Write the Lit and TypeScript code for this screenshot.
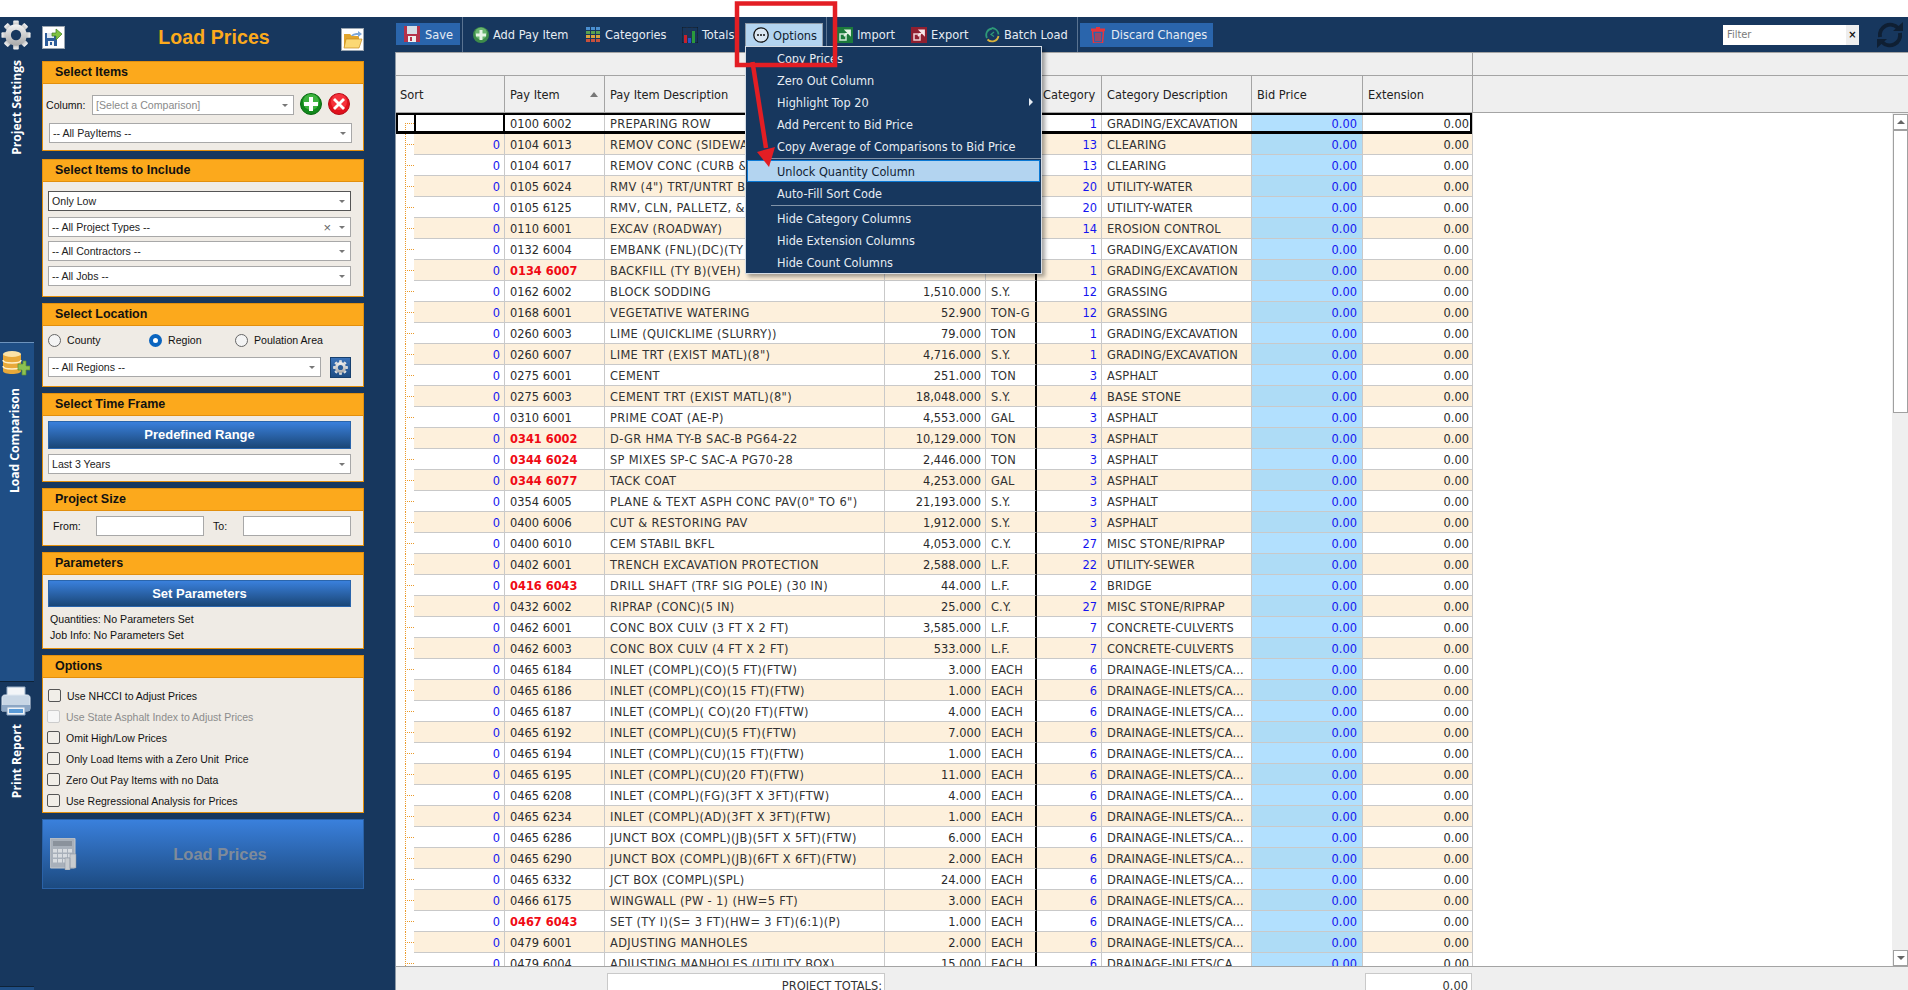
import { LitElement, html, css, svg } from "lit";
import { customElement } from "lit/decorators.js";

type R = [string, string, string, string, number, string, boolean?];
const G = "GRADING/EXCAVATION", A = "ASPHALT", D = "DRAINAGE-INLETS/CA...", M = "MISC STONE/RIPRAP", C = "CONCRETE-CULVERTS";
const rows: R[] = [
  ["0100 6002", "PREPARING ROW", "", "", 1, G],
  ["0104 6013", "REMOV CONC (SIDEWALKS)", "", "", 13, "CLEARING"],
  ["0104 6017", "REMOV CONC (CURB & GUTTER)", "", "", 13, "CLEARING"],
  ["0105 6024", "RMV (4\") TRT/UNTRT BASE", "", "", 20, "UTILITY-WATER"],
  ["0105 6125", "RMV, CLN, PALLETZ, & STACK", "", "", 20, "UTILITY-WATER"],
  ["0110 6001", "EXCAV (ROADWAY)", "", "", 14, "EROSION CONTROL"],
  ["0132 6004", "EMBANK (FNL)(DC)(TY B)", "", "", 1, G],
  ["0134 6007", "BACKFILL (TY B)(VEH)", "", "", 1, G, true],
  ["0162 6002", "BLOCK SODDING", "1,510.000", "S.Y.", 12, "GRASSING"],
  ["0168 6001", "VEGETATIVE WATERING", "52.900", "TON-G", 12, "GRASSING"],
  ["0260 6003", "LIME (QUICKLIME (SLURRY))", "79.000", "TON", 1, G],
  ["0260 6007", "LIME TRT (EXIST MATL)(8\")", "4,716.000", "S.Y.", 1, G],
  ["0275 6001", "CEMENT", "251.000", "TON", 3, A],
  ["0275 6003", "CEMENT TRT (EXIST MATL)(8\")", "18,048.000", "S.Y.", 4, "BASE STONE"],
  ["0310 6001", "PRIME COAT (AE-P)", "4,553.000", "GAL", 3, A],
  ["0341 6002", "D-GR HMA TY-B SAC-B PG64-22", "10,129.000", "TON", 3, A, true],
  ["0344 6024", "SP MIXES SP-C SAC-A PG70-28", "2,446.000", "TON", 3, A, true],
  ["0344 6077", "TACK COAT", "4,253.000", "GAL", 3, A, true],
  ["0354 6005", "PLANE & TEXT ASPH CONC PAV(0\" TO 6\")", "21,193.000", "S.Y.", 3, A],
  ["0400 6006", "CUT & RESTORING PAV", "1,912.000", "S.Y.", 3, A],
  ["0400 6010", "CEM STABIL BKFL", "4,053.000", "C.Y.", 27, M],
  ["0402 6001", "TRENCH EXCAVATION PROTECTION", "2,588.000", "L.F.", 22, "UTILITY-SEWER"],
  ["0416 6043", "DRILL SHAFT (TRF SIG POLE) (30 IN)", "44.000", "L.F.", 2, "BRIDGE", true],
  ["0432 6002", "RIPRAP (CONC)(5 IN)", "25.000", "C.Y.", 27, M],
  ["0462 6001", "CONC BOX CULV (3 FT X 2 FT)", "3,585.000", "L.F.", 7, C],
  ["0462 6003", "CONC BOX CULV (4 FT X 2 FT)", "533.000", "L.F.", 7, C],
  ["0465 6184", "INLET (COMPL)(CO)(5 FT)(FTW)", "3.000", "EACH", 6, D],
  ["0465 6186", "INLET (COMPL)(CO)(15 FT)(FTW)", "1.000", "EACH", 6, D],
  ["0465 6187", "INLET (COMPL)( CO)(20 FT)(FTW)", "4.000", "EACH", 6, D],
  ["0465 6192", "INLET (COMPL)(CU)(5 FT)(FTW)", "7.000", "EACH", 6, D],
  ["0465 6194", "INLET (COMPL)(CU)(15 FT)(FTW)", "1.000", "EACH", 6, D],
  ["0465 6195", "INLET (COMPL)(CU)(20 FT)(FTW)", "11.000", "EACH", 6, D],
  ["0465 6208", "INLET (COMPL)(FG)(3FT X 3FT)(FTW)", "4.000", "EACH", 6, D],
  ["0465 6234", "INLET (COMPL)(AD)(3FT X 3FT)(FTW)", "1.000", "EACH", 6, D],
  ["0465 6286", "JUNCT BOX (COMPL)(JB)(5FT X 5FT)(FTW)", "6.000", "EACH", 6, D],
  ["0465 6290", "JUNCT BOX (COMPL)(JB)(6FT X 6FT)(FTW)", "2.000", "EACH", 6, D],
  ["0465 6332", "JCT BOX (COMPL)(SPL)", "24.000", "EACH", 6, D],
  ["0466 6175", "WINGWALL (PW - 1) (HW=5 FT)", "3.000", "EACH", 6, D],
  ["0467 6043", "SET (TY I)(S= 3 FT)(HW= 3 FT)(6:1)(P)", "1.000", "EACH", 6, D, true],
  ["0479 6001", "ADJUSTING MANHOLES", "2.000", "EACH", 6, D],
  ["0479 6004", "ADJUSTING MANHOLES (UTILITY BOX)", "15.000", "EACH", 6, D],
];

const gear = (size: number, fill: string, hole: string) => html`<svg width=${size} height=${size} viewBox="0 0 32 32">
  <defs><linearGradient id="gg" x1="0" y1="0" x2="0" y2="1"><stop offset="0" stop-color="#f4f4f4"/><stop offset="1" stop-color=${fill}/></linearGradient></defs>
  ${[0, 45, 90, 135, 180, 225, 270, 315].map(a => svg`<rect x="13" y="0.5" width="6" height="7" rx="1" fill="url(#gg)" transform="rotate(${a} 16 16)"/>`)}
  <circle cx="16" cy="16" r="11.5" fill="url(#gg)"/><circle cx="16" cy="16" r="5.5" fill=${hole}/></svg>`;

const floppyArrow = html`<svg width="19" height="19" viewBox="0 0 19 19"><path d="M1 5h12v13H1z" fill="#2d5d9a"/><path d="M3 5h7v5H3z" fill="#dfe8f2"/><path d="M4 13h6v5H4z" fill="#f2f2f2"/><path d="M6 14h2v3H6z" fill="#2d5d9a"/><path d="M8 5h4V1l6 5-6 6V8H8z" fill="#7fc241" stroke="#3c7d1e" stroke-width=".7"/></svg>`;
const folder = html`<svg width="20" height="18" viewBox="0 0 20 18"><path d="M1 3h6l2 2h7v11H1z" fill="#e2a52c"/><path d="M3 8h16l-3 9H1z" fill="#fbd874" stroke="#c58b1c" stroke-width=".7"/><path d="M8 5c2-3 5-3 7-3V0l4 3-4 3V4c-2 0-4 0-5 1z" fill="#7da7d9"/></svg>`;
const plusBtn = html`<svg width="22" height="22" viewBox="0 0 22 22"><circle cx="11" cy="11" r="10.5" fill="#12881c" stroke="#0a6a12"/><circle cx="11" cy="9" r="8" fill="#3eb33f"/><path d="M9 4h4v5h5v4h-5v5H9v-5H4V9h5z" fill="#fff"/></svg>`;
const xBtn = html`<svg width="22" height="22" viewBox="0 0 22 22"><circle cx="11" cy="11" r="10.5" fill="#e0101c" stroke="#b50d18"/><circle cx="11" cy="9" r="8" fill="#f5323c"/><path d="M7 5l4 4 4-4 2 2-4 4 4 4-2 2-4-4-4 4-2-2 4-4-4-4z" fill="#fff"/></svg>`;
const db = html`<svg width="28" height="28" viewBox="0 0 28 28"><path d="M1 4v17c0 2 4 3 9 3s9-1 9-3V4z" fill="#e8a93a"/><ellipse cx="10" cy="4" rx="9" ry="3" fill="#fbe3a8"/><path d="M1 10c0 2 4 3 9 3s9-1 9-3M1 16c0 2 4 3 9 3s9-1 9-3" fill="none" stroke="#fff0c8" stroke-width="1.5"/><path d="M16 14h5v-3h3v5h4v4h-4v5h-4v-5h-4v-4z" fill="#8cc152" stroke="#5f8f2f" stroke-width=".7"/></svg>`;
const printer = html`<svg width="32" height="32" viewBox="0 0 32 32"><path d="M7 2h18v10H7z" fill="#f3f5f8" stroke="#9db2c9"/><path d="M2 13c0-2 1-3 3-3h22c2 0 3 1 3 3v10c0 2-1 3-3 3H2z" fill="#c8d6e5" stroke="#dfe8f2"/><path d="M2 20h28v6H2z" fill="#8ca6c4"/><path d="M7 22h18v8H7z" fill="#eef2f7" stroke="#8ca6c4"/><path d="M9 24h14v4H9z" fill="#5a9bd8"/></svg>`;
const calc = html`<svg width="27" height="32" viewBox="0 0 27 32"><rect x="0" y="0" width="25" height="30" rx="1" fill="#a8b0ba" stroke="#c4c8cc"/><rect x="3" y="3" width="19" height="5" fill="#8a929c"/>${[11, 16, 21].map(y => [3, 8, 13, 18].map(x => svg`<rect x=${x} y=${y} width="4" height="3.5" fill="#d8dce0"/>`))}<path d="M15 20h5v12h-5zM20 16h6v14h-6z" fill="#c8ccd0" stroke="#8a929c" stroke-width=".5"/></svg>`;
const IC: Record<string, any> = {
  save: html`<svg width="16" height="16" viewBox="0 0 16 16"><path d="M0 0h16v16H0z" fill="#b5324a"/><path d="M3 0h10v8H3z" fill="#d5dde6"/><path d="M4 10h8v6H4z" fill="#eee"/><path d="M6 11h2v4H6z" fill="#b5324a"/></svg>`,
  add: html`<svg width="16" height="16" viewBox="0 0 16 16"><circle cx="8" cy="8" r="8" fill="#3d8b4a"/><circle cx="8" cy="6.5" r="6" fill="#69b56f"/><path d="M6.5 3h3v3.5H13v3H9.500V13h-3V9.500H3v-3h3.500z" fill="#e6f3e6"/></svg>`,
  cats: html`<svg width="15" height="15" viewBox="0 0 15 15">${[["#4a8fd0", "#4a8fd0", "#4a8fd0"], ["#59a14f", "#59a14f", "#59a14f"], ["#d9a53c", "#d9a53c", "#d9a53c"], ["#c8503c", "#c8503c", "#c8503c"]].map((r, y) => r.map((c, x) => svg`<rect x=${x * 5} y=${y * 4} width="4" height="3" fill=${c}/>`))}</svg>`,
  totals: html`<svg width="16" height="16" viewBox="0 0 16 16"><path d="M0 0h16v16H0z" fill="none" stroke="#111" stroke-width=".8"/><path d="M0 5h16M0 10h16M5 0v16M10 0v16" stroke="#334" stroke-width=".5"/><path d="M2 8h3v8H2z" fill="#c8202c"/><path d="M6 11h3v5H6z" fill="#2850c8"/><path d="M10 4h3v12h-3z" fill="#2a9a3c"/></svg>`,
  options: html`<svg width="16" height="16" viewBox="0 0 16 16"><circle cx="8" cy="8" r="7.200" fill="#dbe7f2" stroke="#111" stroke-width="1.300"/><circle cx="5" cy="8" r="1" fill="#111"/><circle cx="8" cy="8" r="1" fill="#111"/><circle cx="11" cy="8" r="1" fill="#111"/></svg>`,
  import: html`<svg width="16" height="16" viewBox="0 0 16 16"><path d="M0 0h16v16H0z" fill="#1c7a3c"/><path d="M3 7h6v6H3z" fill="none" stroke="#cfe8d6" stroke-width="1.500"/><path d="M7 9l5-5M9 3.500h4v4z" stroke="#e6f3e6" stroke-width="1.800" fill="#e6f3e6"/></svg>`,
  export: html`<svg width="16" height="16" viewBox="0 0 16 16"><path d="M0 0h16v16H0z" fill="#8f1f30"/><path d="M3 7h6v6H3z" fill="none" stroke="#f0d0d4" stroke-width="1.500"/><path d="M7 9l5-5M9 3.500h4v4z" stroke="#f6e6e8" stroke-width="1.800" fill="#f6e6e8"/></svg>`,
  batch: html`<svg width="15" height="16" viewBox="0 0 15 16"><path d="M2 11a6.500 6.500 0 0 1 5-9.500" fill="none" stroke="#2e9a78" stroke-width="1.800"/><path d="M7 1a7 7 0 0 1 6.500 6.500" fill="none" stroke="#2e9a78" stroke-width="1.800"/><path d="M13.500 9a6.500 6.500 0 0 1-11 3.500" fill="none" stroke="#d8b23c" stroke-width="1.800"/><path d="M9 5L6 7.500l3 2" fill="none" stroke="#2e9a78" stroke-width="1.200"/></svg>`,
  trash: html`<svg width="16" height="17" viewBox="0 0 16 17"><path d="M6 1h4v1.500H6zM1 2.500h14V5H1z" fill="#e8353c"/><path d="M2.500 5h11l-1 12h-9z" fill="none" stroke="#e8353c" stroke-width="1.500"/><path d="M6 7v8M8 7v8M10 7v8" stroke="#e8353c" stroke-width="1.200"/></svg>`,
};

const tools: [string, string, number][] = [
  ["add", "Add Pay Item", 113], ["cats", "Categories", 96], ["totals", "Totals", 63],
];
const tools2: [string, string, number][] = [
  ["import", "Import", 74], ["export", "Export", 74], ["batch", "Batch Load", 92],
];
const opts: [string, boolean][] = [
  ["Use NHCCI to Adjust Prices", false], ["Use State Asphalt Index to Adjust Prices", true], ["Omit High/Low Prices", false],
  ["Only Load Items with a Zero Unit  Price", false], ["Zero Out Pay Items with no Data", false], ["Use Regressional Analysis for Prices", false],
];

@customElement("app-root")
export class AppRoot extends LitElement {
  static styles = css`
    :host { display: block; position: relative; width: 1908px; height: 990px; overflow: hidden; background: #fff; font-family: "Liberation Sans", Arial, sans-serif; font-size: 11px; color: #111; }
    .app { display: flex; height: 973px; margin-top: 17px; position: absolute; top: 0; left: 0; right: 0; background: #17375e; }
    .rail { width: 34px; flex: none; display: flex; flex-direction: column; color: #fff; }
    .tab { display: flex; flex-direction: column; align-items: center; }
    .tab1 { height: 325px; padding-top: 3px; box-sizing: border-box; }
    .tab1 > svg { margin-left: -2px; }
    .tab2 { height: 339px; background: #1f4e85; border-top: 1px solid #6d93bd; box-sizing: border-box; padding-top: 7px; }
    .tab3 { height: 305px; border-top: 1px solid #0f2338; box-sizing: border-box; padding-top: 3px; }
    .tab3 > svg { margin-left: -2px; }
    .tabend { flex: 1; border-top: 1px solid #0f2338; background: #1f4e85; }
    .vt { writing-mode: vertical-rl; transform: rotate(180deg); font: 700 12.100px "Open Sans", sans-serif; white-space: nowrap; }
    .tab1 .vt { margin-top: 10px; margin-left: -2px; }
    .tab2 .vt { margin-top: 10px; margin-left: -6px; }
    .tab3 .vt { margin-top: 7px; margin-left: -2px; }
    .tab2 svg { margin-left: -3px; }
    .side { width: 322px; flex: none; margin: 0 31px 0 8px; display: flex; flex-direction: column; }
    .title { height: 44px; display: flex; align-items: flex-start; justify-content: space-between; flex: none; }
    .ib { width: 21px; height: 21px; background: #fff; border: 1px solid #9aa5b0; display: flex; align-items: center; justify-content: center; margin-top: 9px; }
    .ib.r { margin-top: 11px; }
    .title h1 { margin: 9px 0 0; font: 700 19.500px "Liberation Sans", sans-serif; color: #fcaa1c; flex: 1; text-align: center; padding-left: 22px; letter-spacing: .1px; }
    .panel { border: 1px solid #e28f0d; background: #efebe5; box-sizing: border-box; flex: none; margin-bottom: 6px; display: flex; flex-direction: column; }
    .ph { height: 21px; flex: none; background: #fca91c; border-bottom: 1px solid #e28f0d; font: 700 12.500px/21px "Liberation Sans", sans-serif; padding-left: 12px; color: #111; }
    .p1 { height: 90px; margin-bottom: 8px; } .p2 { height: 138px; } .p3 { height: 84px; } .p4 { height: 89px; } .p5 { height: 58px; } .p6 { height: 97px; } .p7 { height: 158px; }
    .b1 { padding: 10px 0 0 3px; display: flex; flex-direction: column; }
    .rowc { display: flex; align-items: center; height: 22px; }
    .lbl { width: 46px; font-size: 10.600px; }
    .sel { height: 20px; box-sizing: border-box; border: 1px solid #a8a8a8; background: #fff; display: flex; align-items: center; padding-left: 3px; font-size: 10.600px; color: #222; position: relative; }
    .sel::after { content: ""; position: absolute; right: 5px; top: 8px; border-left: 3px solid transparent; border-right: 3px solid transparent; border-top: 3px solid #777; }
    .sel .x { position: absolute; right: 19px; top: 2px; color: #666; font-size: 13px; }
    .ph2 { color: #8a8a8a; }
    .dark { border-color: #555; }
    .s202 { width: 202px; } .w302 { width: 303px; }
    .ml6 { margin-left: 6px; } 
    .p2s { padding: 9px 0 0 5px; display: flex; flex-direction: column; }
    .sel.m6 { margin-top: 6px; } .sel.m4 { margin-top: 4px; } .sel.m5 { margin-top: 5px; }
    .s1b { margin: 7px 0 0 3px; }
    .radios { display: flex; padding: 6px 0 0 5px; height: 16px; align-items: center; font-size: 10.600px; }
    .radio { width: 13px; height: 13px; border-radius: 50%; border: 1px solid #666; background: #f4f4f4; box-sizing: border-box; margin-right: 6px; flex: none; }
    .radio.on { border: 4px solid #0a64bf; background: #fff; }
    .rg { display: flex; align-items: center; }
    .rg1 { width: 101px; } .rg2 { width: 86px; }
    .rsel { display: flex; padding: 9px 0 0 5px; }
    .s273 { width: 273px; }
    .gbtn { width: 21px; height: 21px; margin-left: 9px; background: linear-gradient(#3a72b8, #1f4e85); border: 1px solid #17406f; box-sizing: border-box; display: flex; align-items: center; justify-content: center; }
    .pad5 { padding: 5px 0 0 5px; display: flex; flex-direction: column; }
    .bbtn { width: 303px; height: 28px; box-sizing: border-box; border: 1px solid #2a65ac; background: linear-gradient(#3a80dc, #1a4676); color: #fff; font: 700 13px/26px "Liberation Sans", sans-serif; text-align: center; }
    .bbtn.h27 { height: 27px; line-height: 25px; }
    .sz { display: flex; align-items: center; padding: 5px 0 0 10px; font-size: 10.600px; }
    .in { height: 20px; background: #fff; border: 1px solid #a8a8a8; box-sizing: border-box; width: 108px; }
    .fl { width: 43px; } .tl { width: 30px; margin-left: 9px; }
    .pt { padding: 4px 0 0 7px; line-height: 16px; font-size: 10.600px; }
    .opts { padding: 7px 0 0 4px; display: flex; flex-direction: column; }
    .ck { display: flex; align-items: center; height: 21px; font-size: 10.500px; white-space: pre; }
    .cb { width: 13px; height: 13px; border: 1px solid #555; border-radius: 2px; box-sizing: border-box; margin-right: 6px; background: #f1eee8; flex: none; }
    .ck.dis { color: #8c8c8c; } .ck.dis .cb { border-color: #ccc; background: #f6f6f6; }
    .ck.first { margin-left: 1px; }
    .loadb { height: 70px; box-sizing: border-box; border: 1px solid #2a62a8; background: linear-gradient(#3a80dc, #1c4a80); display: flex; align-items: center; padding-left: 7px; color: #7f8b9a; font: 700 16.500px "Liberation Sans", sans-serif; flex: none; }
    .loadb span { flex: 1; text-align: center; }
    .main { flex: 1; min-width: 0; display: flex; flex-direction: column; font-family: "DejaVu Sans Condensed", "DejaVu Sans", sans-serif; font-size: 12.700px; }
    .tb { height: 35px; flex: none; display: flex; align-items: center; padding-left: 1px; color: #e6ecf3; }
    .savebtn { width: 64px; height: 22px; background: #2a65ac; display: flex; align-items: center; gap: 5px; padding-left: 8px; box-sizing: border-box; margin-top: -1px; }
    .sep { width: 1px; height: 35px; background: #5a7391; flex: none; margin: 0 10px 0 2px; }
    .sep.s2 { margin: 0 2px 0 0; }
    .tool { display: flex; align-items: center; gap: 4px; flex: none; height: 22px; white-space: nowrap; }
    .tool svg { flex: none; }
    .optbtn { width: 78px; height: 23px; box-sizing: border-box; background: #b3d4f0; border: 1px solid #8d99a6; border-bottom: none; color: #123; display: flex; align-items: center; gap: 4px; padding-left: 7px; flex: none; }
    .disc { width: 133px; height: 24px; background: #2a65ac; display: flex; align-items: center; gap: 5px; padding-left: 10px; box-sizing: border-box; flex: none; }
    .fil { margin-left: auto; width: 136px; height: 20px; background: #fff; display: flex; align-items: center; justify-content: space-between; color: #7a7a7a; font-size: 11px; padding-left: 4px; box-sizing: border-box; }
    .fil b { width: 13px; height: 20px; background: #eee; color: #111; text-align: center; line-height: 19px; font-size: 11px; }
    .ref { margin: 0 3px 0 16px; width: 30px; height: 30px; flex: none; }
    .content { flex: 1; min-height: 0; display: flex; flex-direction: column; background: #fff; border-left: 1px solid #8d99a6; }
    .band { height: 23px; flex: none; box-sizing: border-box; background: #efefef; border-top: 1px solid #a4a4a4; display: flex; }
    .band i { display: block; width: 1077px; border-right: 1px solid #a4a4a4; box-sizing: border-box; }
    .g { display: grid; grid-template-columns: 18px 91px 100px 280px 101px 51px 65px 150px 111px 110px; width: 1076px; }
    .hd { height: 38px; flex: none; box-sizing: border-box; background: #efefef; border-top: 1px solid #a4a4a4; border-bottom: 1px solid #a4a4a4; display: flex; color: #222; }
    .hd .g { grid-template-columns: 109px 100px 280px 101px 51px 65px 150px 111px 110px; }
    .hc { border-right: 1px solid #a4a4a4; padding-left: 5px; line-height: 37px; position: relative; white-space: nowrap; }
    .hc.first { padding-left: 4px; }
    .hc.cat { padding-left: 6px; }
    .tri { position: absolute; right: 6px; top: 16px; border-left: 4px solid transparent; border-right: 4px solid transparent; border-bottom: 5px solid #777; }
    .bodyw { flex: 1; min-height: 0; display: flex; overflow: hidden; }
    .grid { width: 1077px; flex: none; }
    .blank { flex: 1; }
    .r { height: 21px; position: relative; color: #2a2a2a; line-height: 22px; }
    .r > div { border-bottom: 1px solid #c9c9c9; border-right: 1px solid #c9c9c9; box-sizing: border-box; padding: 0 4px 0 5px; white-space: nowrap; overflow: hidden; height: 21px; background: #fff; }
    .r.alt > div { background: #fdf0dc; }
    .r > .gut { border: 0; padding: 0; position: relative; background: #fff !important; }
    .gut::before { content: ""; position: absolute; left: 9px; top: 0; bottom: 0; border-left: 1px dotted #eb9a2a; }
    .gut::after { content: ""; position: absolute; left: 9px; top: 10px; width: 9px; border-top: 1px dotted #eb9a2a; }
    .r > .num { text-align: right; color: #1414f0; }
    .r > .rt { text-align: right; }
    .r > .u { border-right: 2px solid #000; }
    .r > .d { letter-spacing: .35px; color: #333; }
    .r > .c { letter-spacing: .15px; color: #333; }
    .red { color: #f00a14; font-weight: 700; }
    .r > .bid { background: #b2e0fe; color: #1414f0; text-align: right; padding-right: 5px; }
    .r.alt > .bid { background: #aedcf6; }
    .r > .ext { padding-right: 3px; text-align: right; }
    .r.s::after { content: ""; position: absolute; inset: 0 0 0 0; border: 2px solid #000; border-width: 2px 2px 3px 2px; pointer-events: none; }
    .r.s > .gut::before { top: 10px; }
    .r.s > .sc { border-left: 2px solid #000; border-right: 2px solid #000; }
    .sb { width: 16px; flex: none; background: #efefef; display: flex; flex-direction: column; align-items: flex-end; padding-top: 1px; box-sizing: border-box; }
    .sbb { width: 15px; height: 16px; box-sizing: border-box; background: #fff; border: 1px solid #a0a0a0; position: relative; }
    .up::after, .dn::after { content: ""; position: absolute; left: 3px; top: 5px; border-left: 4px solid transparent; border-right: 4px solid transparent; }
    .up::after { border-bottom: 4px solid #666; } .dn::after { border-top: 4px solid #666; }
    .thumb { width: 15px; height: 283px; box-sizing: border-box; border: 1px solid #a0a0a0; background: #fff; }
    .sbs { flex: 1; }
    .foot { height: 24px; flex: none; box-sizing: border-box; background: #efefef; border-top: 1px solid #a4a4a4; padding: 6px 0 0 211px; display: flex; overflow: hidden; color: #333; }
    .tot { height: 24px; box-sizing: border-box; border: 1px solid #c9c9c9; background: #fff; width: 278px; text-align: right; padding-right: 2px; line-height: 23px; flex: none; }
    .tot.e { width: 107px; margin-left: 480px; padding-right: 3px; }
    .menu { position: absolute; left: 745px; top: 46px; width: 297px; height: 228px; box-sizing: border-box; background: #17375e; border: 1px solid #d5dce4; box-shadow: 3px 3px 4px rgba(0,0,0,.35); color: #e6ecf3; font-family: "DejaVu Sans Condensed", "DejaVu Sans", sans-serif; font-size: 12.600px; z-index: 2; }
    .mi { height: 22px; line-height: 23px; padding-left: 31px; position: relative; }
    .mi.on { background: #b3d4f0; border: 1px solid #0a78d4; color: #123; margin: 0 1px; padding-left: 29px; box-sizing: border-box; line-height: 21px; }
    .mi .ar { position: absolute; right: 8px; top: 7px; border-top: 4px solid transparent; border-bottom: 4px solid transparent; border-left: 4px solid #e6ecf3; }
    .ms { height: 1px; background: #8193a8; margin: 1px 0 1px 25px; }
    .anno { position: absolute; left: 0; top: 0; z-index: 3; pointer-events: none; }
  `;

  sel(t: string, cls = "", x = false) {
    return html`<div class="sel ${cls}">${t}${x ? html`<span class="x">×</span>` : ""}</div>`;
  }

  render() {
    return html`
      <div class="app">
        <div class="rail">
          <div class="tab tab1">${gear(30, "#a8a8a8", "#17375e")}<div class="vt">Project Settings</div></div>
          <div class="tab tab2">${db}<div class="vt">Load Comparison</div></div>
          <div class="tab tab3">${printer}<div class="vt">Print Report</div></div>
          <div class="tabend"></div>
        </div>
        <div class="side">
          <div class="title"><div class="ib">${floppyArrow}</div><h1>Load Prices</h1><div class="ib r">${folder}</div></div>
          <div class="panel p1"><div class="ph">Select Items</div>
            <div class="b1">
              <div class="rowc"><span class="lbl">Column:</span>${this.sel("[Select a Comparison]", "s202 ph2")}<span class="ml6">${plusBtn}</span><span class="ml6">${xBtn}</span></div>
              ${this.sel("-- All PayItems --", "w302 s1b")}
            </div></div>
          <div class="panel p2"><div class="ph">Select Items to Include</div>
            <div class="p2s">${this.sel("Only Low", "w302 dark")}${this.sel("-- All Project Types --", "w302 m6", true)}${this.sel("-- All Contractors --", "w302 m4")}${this.sel("-- All Jobs --", "w302 m5")}</div></div>
          <div class="panel p3"><div class="ph">Select Location</div>
            <div class="radios"><div class="rg rg1"><span class="radio"></span>County</div><div class="rg rg2"><span class="radio on"></span>Region</div><div class="rg"><span class="radio"></span>Poulation Area</div></div>
            <div class="rsel">${this.sel("-- All Regions --", "s273")}<div class="gbtn">${gear(15, "#c8d4e2", "#2a5c98")}</div></div></div>
          <div class="panel p4"><div class="ph">Select Time Frame</div>
            <div class="pad5"><div class="bbtn">Predefined Range</div>${this.sel("Last 3 Years", "w302 m5")}</div></div>
          <div class="panel p5"><div class="ph">Project Size</div>
            <div class="sz"><span class="fl">From:</span><div class="in"></div><span class="tl">To:</span><div class="in"></div></div></div>
          <div class="panel p6"><div class="ph">Parameters</div>
            <div class="pad5"><div class="bbtn h27">Set Parameters</div></div>
            <div class="pt">Quantities: No Parameters Set<br />Job Info: No Parameters Set</div></div>
          <div class="panel p7"><div class="ph">Options</div>
            <div class="opts">${opts.map(([t, d], i) => html`<div class="ck ${d ? "dis" : ""} ${i === 0 ? "first" : ""}"><span class="cb"></span>${t}</div>`)}</div></div>
          <div class="loadb">${calc}<span>Load Prices</span></div>
        </div>
        <div class="main">
          <div class="tb">
            <div class="savebtn">${IC.save}<span>Save</span></div>
            <div class="sep"></div>
            ${tools.map(([i, t, w]) => html`<div class="tool" style="width:${w}px">${IC[i]}<span>${t}</span></div>`)}
            <div class="optbtn">${IC.options}<span>Options</span></div>
            <div class="sep" style="margin-left:3px"></div>
            ${tools2.map(([i, t, w]) => html`<div class="tool" style="width:${w}px">${IC[i]}<span>${t}</span></div>`)}
            <div class="sep s2"></div>
            <div class="disc">${IC.trash}<span>Discard Changes</span></div>
            <div class="fil"><span>Filter</span><b>×</b></div>
            <svg class="ref" viewBox="0 0 30 30"><path d="M5 17a10.500 10.500 0 0 1 18-9" fill="none" stroke="#0f1f33" stroke-width="4"/><path d="M25 13a10.500 10.500 0 0 1-18 9" fill="none" stroke="#0f1f33" stroke-width="4"/><path d="M18 11h10V2zM12 19H2v9z" fill="#0f1f33"/></svg>
          </div>
          <div class="content">
            <div class="band"><i></i></div>
            <div class="hd"><div class="g">
              <div class="hc first">Sort</div><div class="hc">Pay Item<span class="tri"></span></div><div class="hc">Pay Item Description</div><div class="hc"></div><div class="hc"></div>
              <div class="hc cat">Category</div><div class="hc">Category Description</div><div class="hc">Bid Price</div><div class="hc">Extension</div>
            </div></div>
            <div class="bodyw">
              <div class="grid">
                ${rows.map((r, i) => html`<div class="r g ${i % 2 ? "alt" : ""} ${i === 0 ? "s" : ""}">
                  <div class="gut"></div>
                  <div class="num sc">${i === 0 ? "" : "0"}</div>
                  <div class=${r[6] ? "red" : ""}>${r[0]}</div>
                  <div class="d">${r[1]}</div>
                  <div class="rt">${r[2]}</div>
                  <div class="u c">${r[3]}</div>
                  <div class="num">${r[4]}</div>
                  <div class="c">${r[5]}</div>
                  <div class="bid">0.00</div>
                  <div class="ext">0.00</div>
                </div>`)}
              </div>
              <div class="blank"></div>
              <div class="sb"><div class="sbb up"></div><div class="thumb"></div><div class="sbs"></div><div class="sbb dn"></div></div>
            </div>
            <div class="foot"><div class="tot">PROJECT TOTALS:</div><div class="tot e">0.00</div></div>
          </div>
        </div>
      </div>
      <div class="menu">
        <div class="mi">Copy Prices</div><div class="mi">Zero Out Column</div><div class="mi">Highlight Top 20<span class="ar"></span></div><div class="mi">Add Percent to Bid Price</div><div class="mi">Copy Average of Comparisons to Bid Price</div>
        <div class="ms"></div><div class="mi on">Unlock Quantity Column</div><div class="mi">Auto-Fill Sort Code</div>
        <div class="ms"></div><div class="mi">Hide Category Columns</div><div class="mi">Hide Extension Columns</div><div class="mi">Hide Count Columns</div>
      </div>
      <svg class="anno" width="1908" height="200" viewBox="0 0 1908 200">
        <rect x="737" y="3.500" width="98" height="61.500" fill="none" stroke="#e31e24" stroke-width="4.500"/>
        <path d="M752.500 62L766 148" stroke="#e31e24" stroke-width="4.500" fill="none"/>
        <path d="M757 152L775 147L769 167z" fill="#e31e24"/>
      </svg>`;
  }
}
